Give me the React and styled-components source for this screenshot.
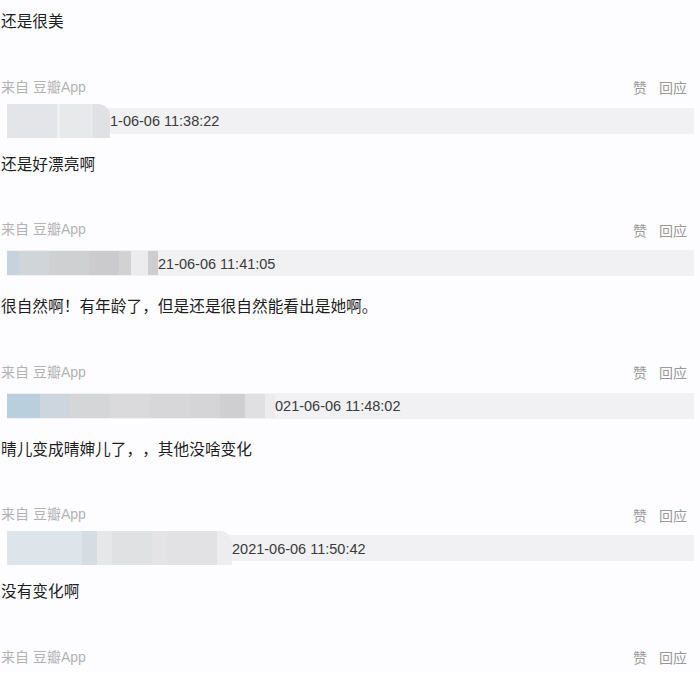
import styled, { createGlobalStyle } from "styled-components";

const GlobalStyle = createGlobalStyle`
  html, body {
    margin: 0;
    padding: 0;
    background: #fdfdff;
  }
  body {
    font-family: "Liberation Sans", "Noto Sans CJK SC", sans-serif;
    color: #222;
  }
`;

const comments = [
  {
    stamp: "1-06-06 11:38:22",
    text: "还是好漂亮啊",
    tall: true,
    tiles: [
      [50, "#e3e5e8"],
      [3, "#eef0f1"],
      [33, "#e8e9eb"],
      [17, "#e0e1e4"],
    ],
  },
  {
    stamp: "21-06-06 11:41:05",
    text: "很自然啊！有年龄了，但是还是很自然能看出是她啊。",
    tiles: [
      [12, "#c6d3de"],
      [30, "#d0d5da"],
      [40, "#cfd0d2"],
      [30, "#cbcbcd"],
      [12, "#d2d2d3"],
      [17, "#ececee"],
      [10, "#cdcdcf"],
    ],
  },
  {
    stamp: "021-06-06 11:48:02",
    text: "晴儿变成晴婶儿了，，其他没啥变化",
    tiles: [
      [33, "#b9cfdd"],
      [30, "#cdd6de"],
      [40, "#d5d6d8"],
      [40, "#dadadc"],
      [40, "#d7d7d9"],
      [30, "#d5d5d7"],
      [25, "#cfcfd1"],
      [20, "#e0e0e2"],
      [10, "#ececee"],
    ],
  },
  {
    stamp: "2021-06-06 11:50:42",
    text: "没有变化啊",
    tall: true,
    tiles: [
      [75, "#dde4ea"],
      [15, "#d5dde3"],
      [15, "#e6e7e9"],
      [40, "#e0e1e3"],
      [15, "#e4e4e6"],
      [50, "#e2e2e4"],
      [15, "#ededef"],
    ],
  },
];

function App() {
  return (
    <Page>
      <GlobalStyle />
      <Text>还是很美</Text>
      {comments.map((c) => (
        <Comment key={c.stamp}>
          <Meta />
          <UserBar>
            <Mosaic $tall={c.tall}>
              {c.tiles.map(([w, color], i) => (
                <Tile key={i} $w={w} $color={color} />
              ))}
            </Mosaic>
            <Stamp>{c.stamp}</Stamp>
          </UserBar>
          <Text>{c.text}</Text>
        </Comment>
      ))}
      <Comment>
        <Meta />
      </Comment>
    </Page>
  );
}

function Meta() {
  return (
    <MetaRow>
      <Source>来自 豆瓣App</Source>
      <Actions>
        <span>赞</span>
        <span>回应</span>
      </Actions>
    </MetaRow>
  );
}

const Page = styled.div`
  display: flex;
  flex-direction: column;
  gap: 43.5px;
  padding: 10px 0 0 1px;
  width: 700px;
  box-sizing: border-box;
`;

const Comment = styled.div`
  display: flex;
  flex-direction: column;
`;

const Text = styled.div`
  font-family: "Noto Sans CJK SC", sans-serif;
  font-size: 15.7px;
  line-height: 22px;
  color: #1e1e1e;
  white-space: nowrap;
  text-spacing-trim: space-all;
`;

const MetaRow = styled.div`
  display: flex;
  justify-content: space-between;
  align-items: center;
  height: 20px;
  padding-right: 13px;
`;

const Source = styled.span`
  font-size: 14px;
  color: #b2b2b2;
`;

const Actions = styled.div`
  display: flex;
  gap: 12px;
  font-size: 14px;
  color: #9a9a9a;
  margin-top: 3px;
`;

const UserBar = styled.div`
  display: flex;
  align-items: center;
  height: 26px;
  margin: 12px 6px 19px 6px;
  background: #f1f1f4;
`;

const Mosaic = styled.div`
  display: flex;
  height: ${({ $tall }) => ($tall ? "34px" : "24px")};
  border-top-right-radius: ${({ $tall }) => ($tall ? "12px" : "0")};
  overflow: hidden;
`;

const Tile = styled.div`
  width: ${({ $w }) => $w}px;
  background: ${({ $color }) => $color};
`;

const Stamp = styled.span`
  font-size: 14.5px;
  color: #3a3a3a;
  padding-top: 1px;
`;

export default App;
